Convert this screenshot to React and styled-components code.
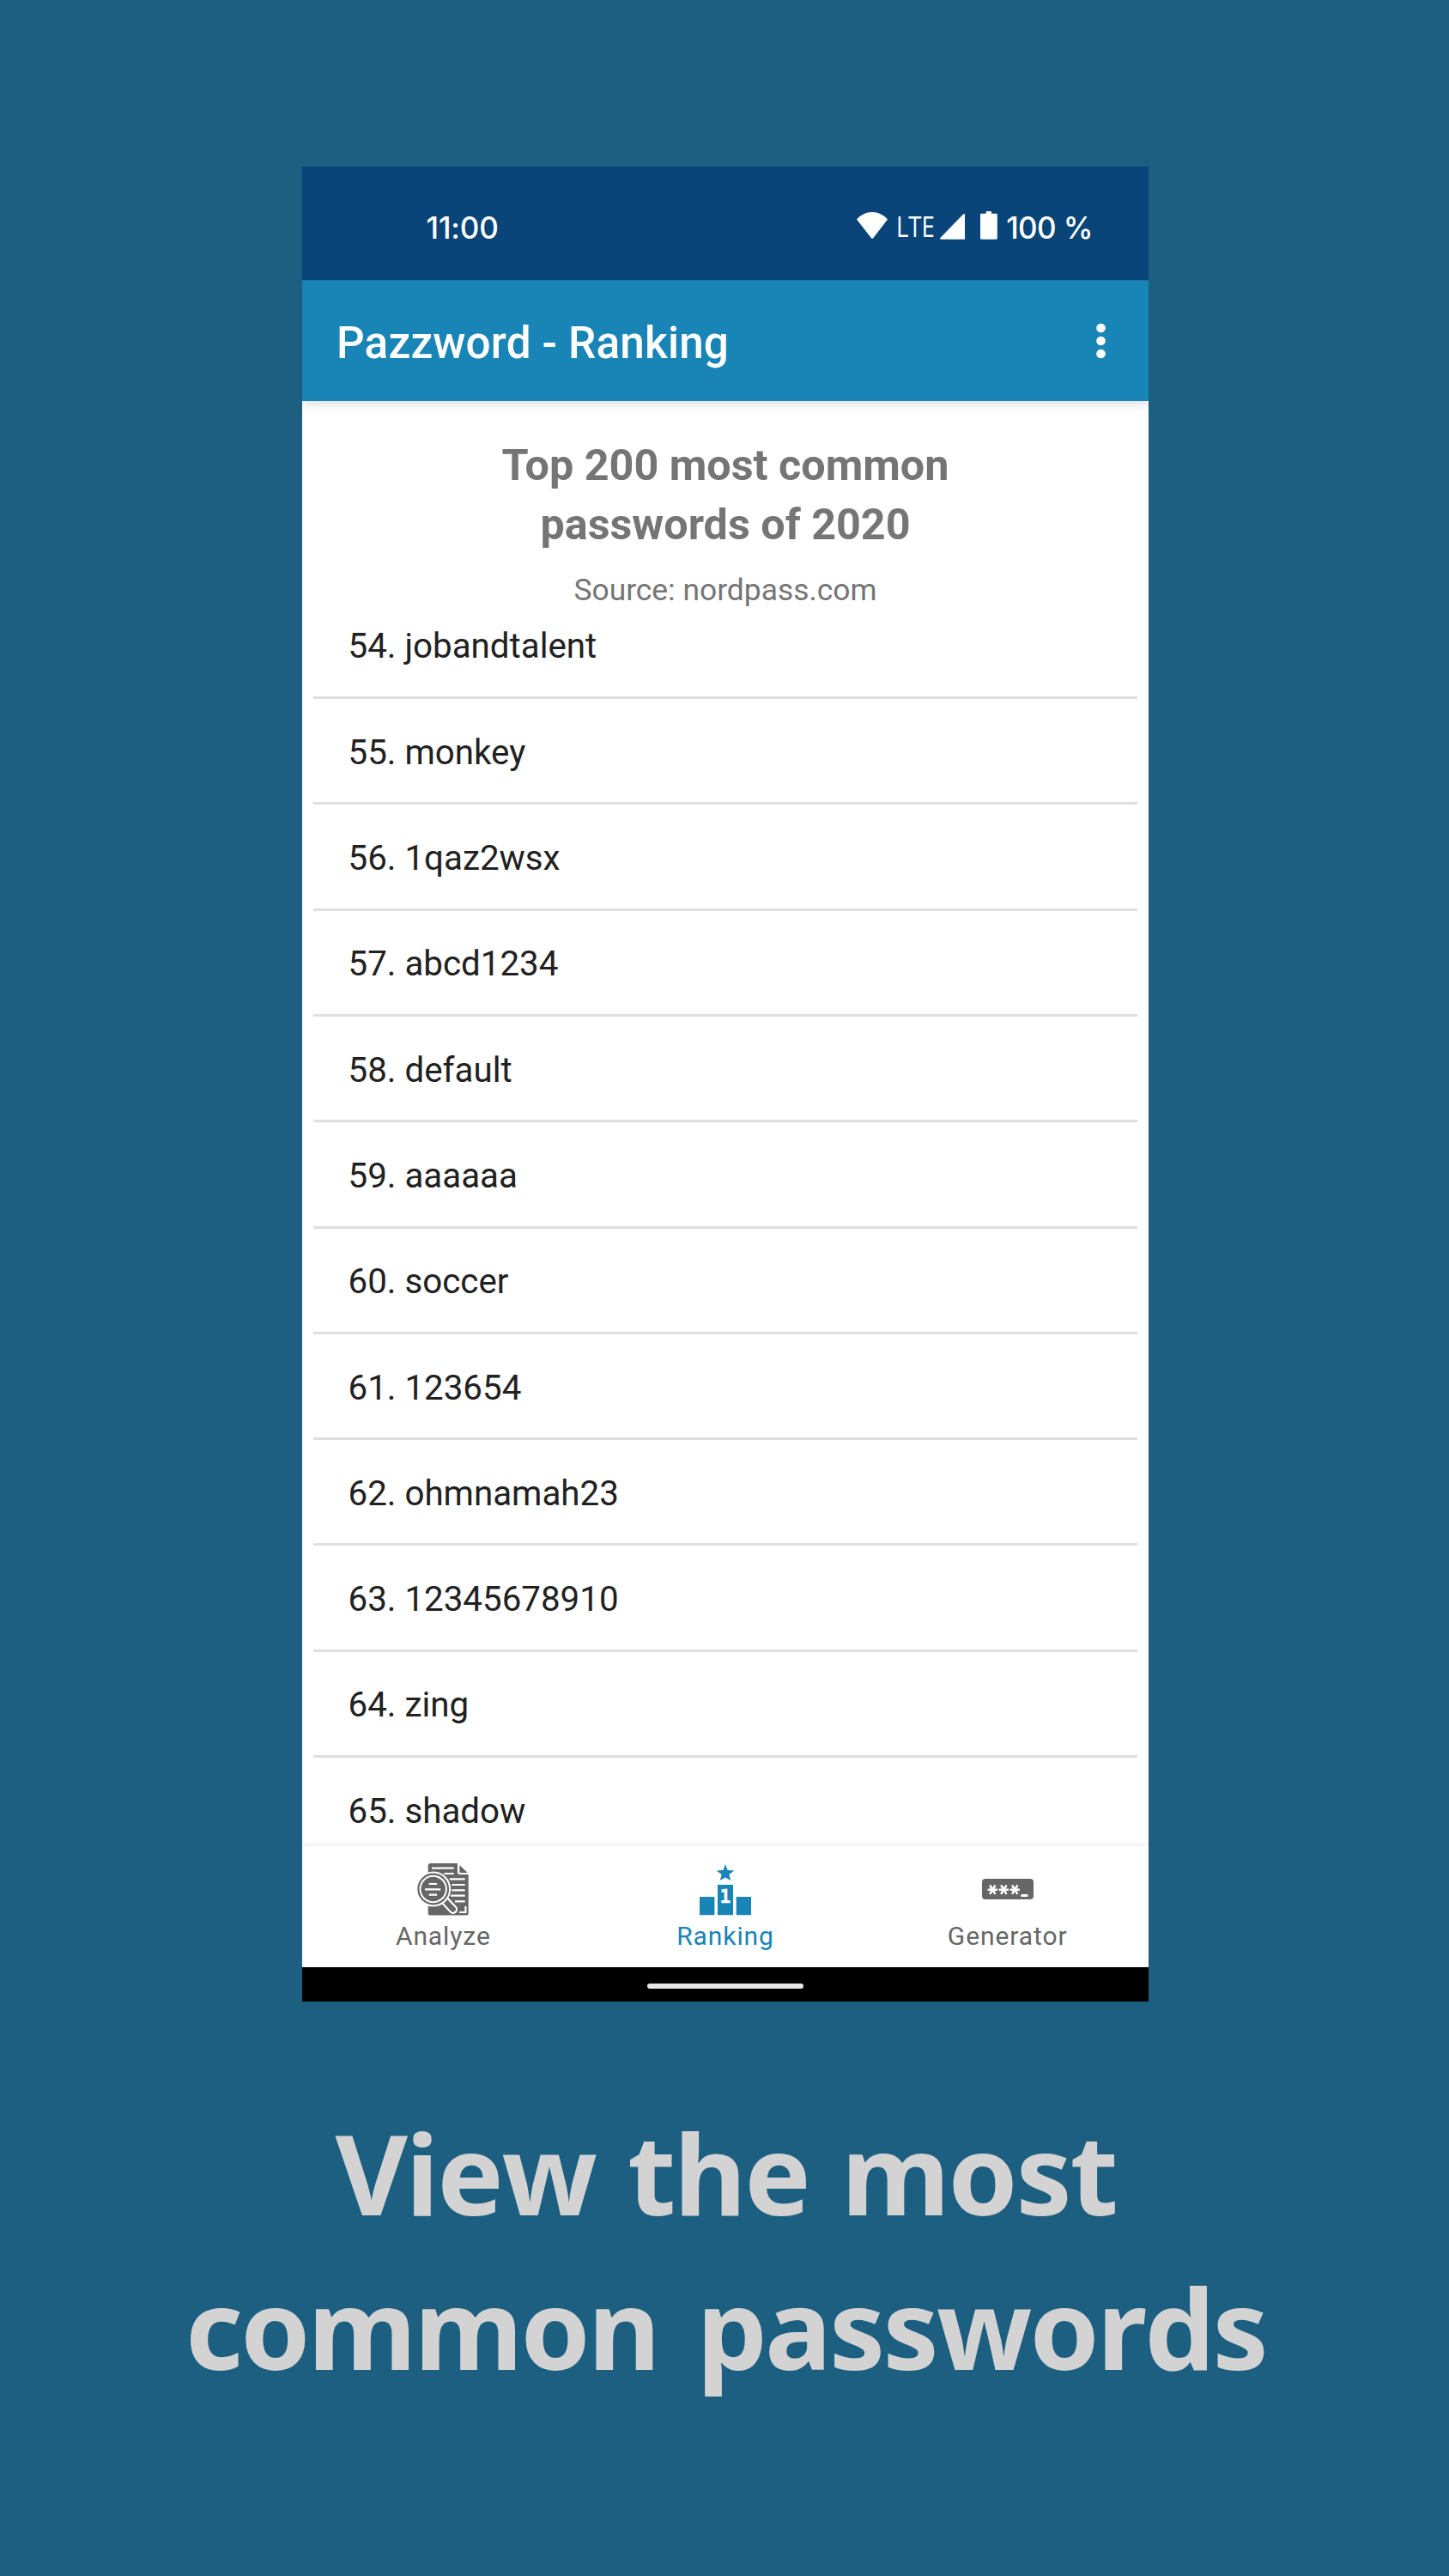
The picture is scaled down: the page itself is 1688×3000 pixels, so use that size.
import React from "react";
import styled, { createGlobalStyle } from "styled-components";

const GlobalStyle = createGlobalStyle`
  * { box-sizing: border-box; }
  body { margin: 0; background: #1d5f80; }
`;

const Poster = styled.main`
  width: 1688px;
  height: 3000px;
  padding-top: 194px;
  display: flex;
  flex-direction: column;
  align-items: center;
  background: #1d5f80;
  overflow: hidden;
`;

const Phone = styled.section`
  width: 986px;
  height: 2137px;
  margin-left: 2px;
  flex: none;
  display: flex;
  flex-direction: column;
  background: #fff;
  font-family: Roboto, sans-serif;
  overflow: hidden;
`;

const StatusBar = styled.div`
  height: 132px;
  flex: none;
  padding: 9px 65px 0 144.5px;
  display: flex;
  align-items: center;
  justify-content: space-between;
  background: #094578;
  color: #fff;
`;

const StatusText = styled.span`
  font: 550 35px/40px Inter, sans-serif;
  letter-spacing: ${(p) => (p.$tight ? "-0.6px" : "-0.1px")};
  white-space: pre;
`;

const StatusIcons = styled.div`
  display: flex;
  align-items: center;
`;

const StatusIcon = styled.svg`
  flex: none;
  width: ${(p) => p.$w}px;
  height: 37px;
  margin-right: ${(p) => p.$gap}px;
  fill: #fff;
`;

const Network = styled.span`
  width: 43px;
  margin-right: 8px;
  font: 400 32px/36px "Open Sans", sans-serif;
  transform: translateY(-1.5px) scaleX(0.86);
  transform-origin: left center;
`;

const AppBar = styled.header`
  height: 141px;
  flex: none;
  padding: 5px 50px 0 40px;
  display: flex;
  align-items: center;
  justify-content: space-between;
  background: #1984b6;
  border-top: 1px solid #1677a8;
  box-shadow: 0 2px 12px rgba(0, 0, 0, 0.17);
  clip-path: inset(0 0 -20px 0);
  color: #fff;
  z-index: 1;
`;

const Title = styled.h1`
  margin: 0;
  font-size: 51.35px;
  font-weight: 500;
  line-height: 60px;
  letter-spacing: 0.13px;
`;

const Overflow = styled.svg`
  width: 11px;
  height: 42px;
  margin-top: -5px;
  fill: #fff;
`;

const Intro = styled.div`
  height: 248px;
  flex: none;
  padding-top: 39.5px;
  text-align: center;
  color: #757575;
`;

const Heading = styled.h2`
  margin: 0;
  font-size: 50.3px;
  font-weight: 700;
  line-height: 69px;
`;

const Source = styled.p`
  margin: 21.5px 0 0;
  font-size: 35.4px;
  line-height: 42px;
`;

const List = styled.ul`
  flex: 1;
  min-height: 0;
  margin: 0;
  padding: 0 13px;
  list-style: none;
  overflow: hidden;
`;

const Row = styled.li`
  height: 123.3px;
  padding: 4px 0 0 40.5px;
  display: flex;
  align-items: center;
  border-bottom: 3px solid #dfdfdf;
  font-size: 40.3px;
  color: #212121;

  &:first-child { margin-top: -24.2px; }
`;

const BottomNav = styled.nav`
  height: 141px;
  flex: none;
  padding-top: 19px;
  display: flex;
  background: #fff;
  box-shadow: 0 0 7px rgba(0, 0, 0, 0.1);
  z-index: 1;
`;

const NavItem = styled.div`
  flex: 1 1 0;
  display: flex;
  flex-direction: column;
  align-items: center;
  gap: 6px;
  color: ${(p) => (p.$active ? "#1984b6" : "#666")};
  font-size: 30px;
  line-height: 36px;
  letter-spacing: 0.9px;

  svg { width: 62px; height: 62px; }
`;

const GestureBar = styled.div`
  height: 40px;
  flex: none;
  padding-top: 4px;
  display: flex;
  align-items: center;
  justify-content: center;
  background: #000;
`;

const Handle = styled.div`
  width: 182px;
  height: 6px;
  border-radius: 3px;
  background: #e8e8e8;
`;

const Caption = styled.p`
  margin: 108.6px 0 0;
  padding-left: 3px;
  text-align: center;
  font: 700 130px/180px "Noto Sans", "Open Sans", sans-serif;
  font-kerning: none;
  color: #d3d3d3;
`;

const CaptionLine = styled.span`
  display: block;
  letter-spacing: ${(p) => p.$tracking}px;
  word-spacing: ${(p) => p.$gap}px;
`;

const AnalyzeIcon = () => (
  <svg viewBox="0 0 62 62" fill="none">
    <path fill="currentColor" d="M16 1H48V11Q48 14 51 14H60.7V59Q60.7 61.6 58 61.6H16Q13.7 61.6 13.7 59V3.5Q13.7 1 16 1Z" />
    <path fill="currentColor" d="M50.3 3L59.7 12H50.3Z" />
    <path stroke="#fff" strokeWidth="2.2" d="M18 6.7H43.7M32.3 13H43.7M38.7 19.3H56.7M41.3 26H56.7M41.3 32.3H56.7M40 38.7H56.7M45 45.3H56.7" />
    <path stroke="#fff" strokeWidth="2.2" d="M50 58H57.4V51" />
    <path stroke="#fff" strokeWidth="10.6" strokeLinecap="round" d="M31 42L42.8 54.6" />
    <path stroke="currentColor" strokeWidth="6.2" strokeLinecap="round" d="M34 45.4L42.8 54.6" />
    <circle cx="19.7" cy="31" r="20.5" fill="#fff" />
    <circle cx="19.7" cy="31" r="17.3" stroke="currentColor" strokeWidth="2.2" />
    <circle cx="19.7" cy="31" r="14.2" fill="currentColor" />
    <path stroke="#fff" strokeWidth="2.2" d="M14.7 25H24M10 31.3H28.3M14.7 37.7H24" />
  </svg>
);

const RankingIcon = () => (
  <svg viewBox="0 0 62 62" fill="currentColor">
    <path d="M31 2L33.6 9L41.3 9.5L35.4 14L37.2 21L31 17.4L24.8 21L26.6 14L20.7 9.5L28.4 9Z" />
    <path d="M1 40H18.4V61.2H1ZM22 26H40V61.2H22ZM43.7 40H61V61.2H43.7Z" />
    <text x="31" y="47" fill="#fff" stroke="#fff" strokeWidth="0.6" fontFamily="DejaVu Sans Mono, monospace" fontWeight="700" fontSize="20.5" letterSpacing="0" textAnchor="middle">1</text>
  </svg>
);

const GeneratorIcon = () => (
  <svg viewBox="0 0 62 62" fill="none">
    <rect x="1" y="19" width="60" height="24" rx="4" fill="currentColor" />
    {[13.3, 26.3, 39.2].map((x) => (
      <path key={x} transform={`translate(${x} 31.7)`} stroke="#fff" strokeWidth="2.5" d="M-5.7 0H5.7M-3.2 -5.2L3.2 5.2M3.2 -5.2L-3.2 5.2" />
    ))}
    <path fill="#fff" d="M46.5 37H54.4V40H46.5Z" />
  </svg>
);

const passwords = [
  "jobandtalent", "monkey", "1qaz2wsx", "abcd1234", "default", "aaaaaa",
  "soccer", "123654", "ohmnamah23", "12345678910", "zing", "shadow",
];

export default function App() {
  return (
    <>
      <GlobalStyle />
      <Poster>
        <Phone>
          <StatusBar>
            <StatusText>11:00</StatusText>
            <StatusIcons>
              <StatusIcon $w={36} $gap={10} viewBox="0 0 36 37">
                <path d="M0 9.5C5 4 11 1 18 1S31 4 36 9.5L19.3 31.3Q18.2 32.8 17 31.3Z" />
              </StatusIcon>
              <Network>LTE</Network>
              <StatusIcon $w={29.5} $gap={18} viewBox="0 0 29.5 37">
                <path d="M0.4 31L26.8 3.8Q29.3 1.8 29.3 4.8V32.7H0.8Q-0.3 32 0.4 31Z" />
              </StatusIcon>
              <StatusIcon $w={20} $gap={10} viewBox="0 0 20 37">
                <path d="M6.7 2.7V1Q6.7 0 7.7 0H12Q13 0 13 1V2.7H18.5Q19.8 2.7 19.8 4V31.4Q19.8 32.7 18.5 32.7H1.3Q0 32.7 0 31.4V4Q0 2.7 1.3 2.7Z" />
              </StatusIcon>
              <StatusText $tight>100 %</StatusText>
            </StatusIcons>
          </StatusBar>
          <AppBar>
            <Title>Pazzword - Ranking</Title>
            <Overflow viewBox="0 0 11 42">
              <circle cx="5.5" cy="6" r="5.3" />
              <circle cx="5.5" cy="21" r="5.3" />
              <circle cx="5.5" cy="36" r="5.3" />
            </Overflow>
          </AppBar>
          <Intro>
            <Heading>Top 200 most common<br />passwords of 2020</Heading>
            <Source>Source: nordpass.com</Source>
          </Intro>
          <List>
            {passwords.map((word, i) => (
              <Row key={word}>{54 + i}. {word}</Row>
            ))}
          </List>
          <BottomNav>
            <NavItem><AnalyzeIcon />Analyze</NavItem>
            <NavItem $active><RankingIcon />Ranking</NavItem>
            <NavItem><GeneratorIcon />Generator</NavItem>
          </BottomNav>
          <GestureBar><Handle /></GestureBar>
        </Phone>
        <Caption>
          <CaptionLine $tracking={-2.3} $gap={6}>View the most</CaptionLine>
          <CaptionLine $tracking={-2.8} $gap={14}>common passwords</CaptionLine>
        </Caption>
      </Poster>
    </>
  );
}
